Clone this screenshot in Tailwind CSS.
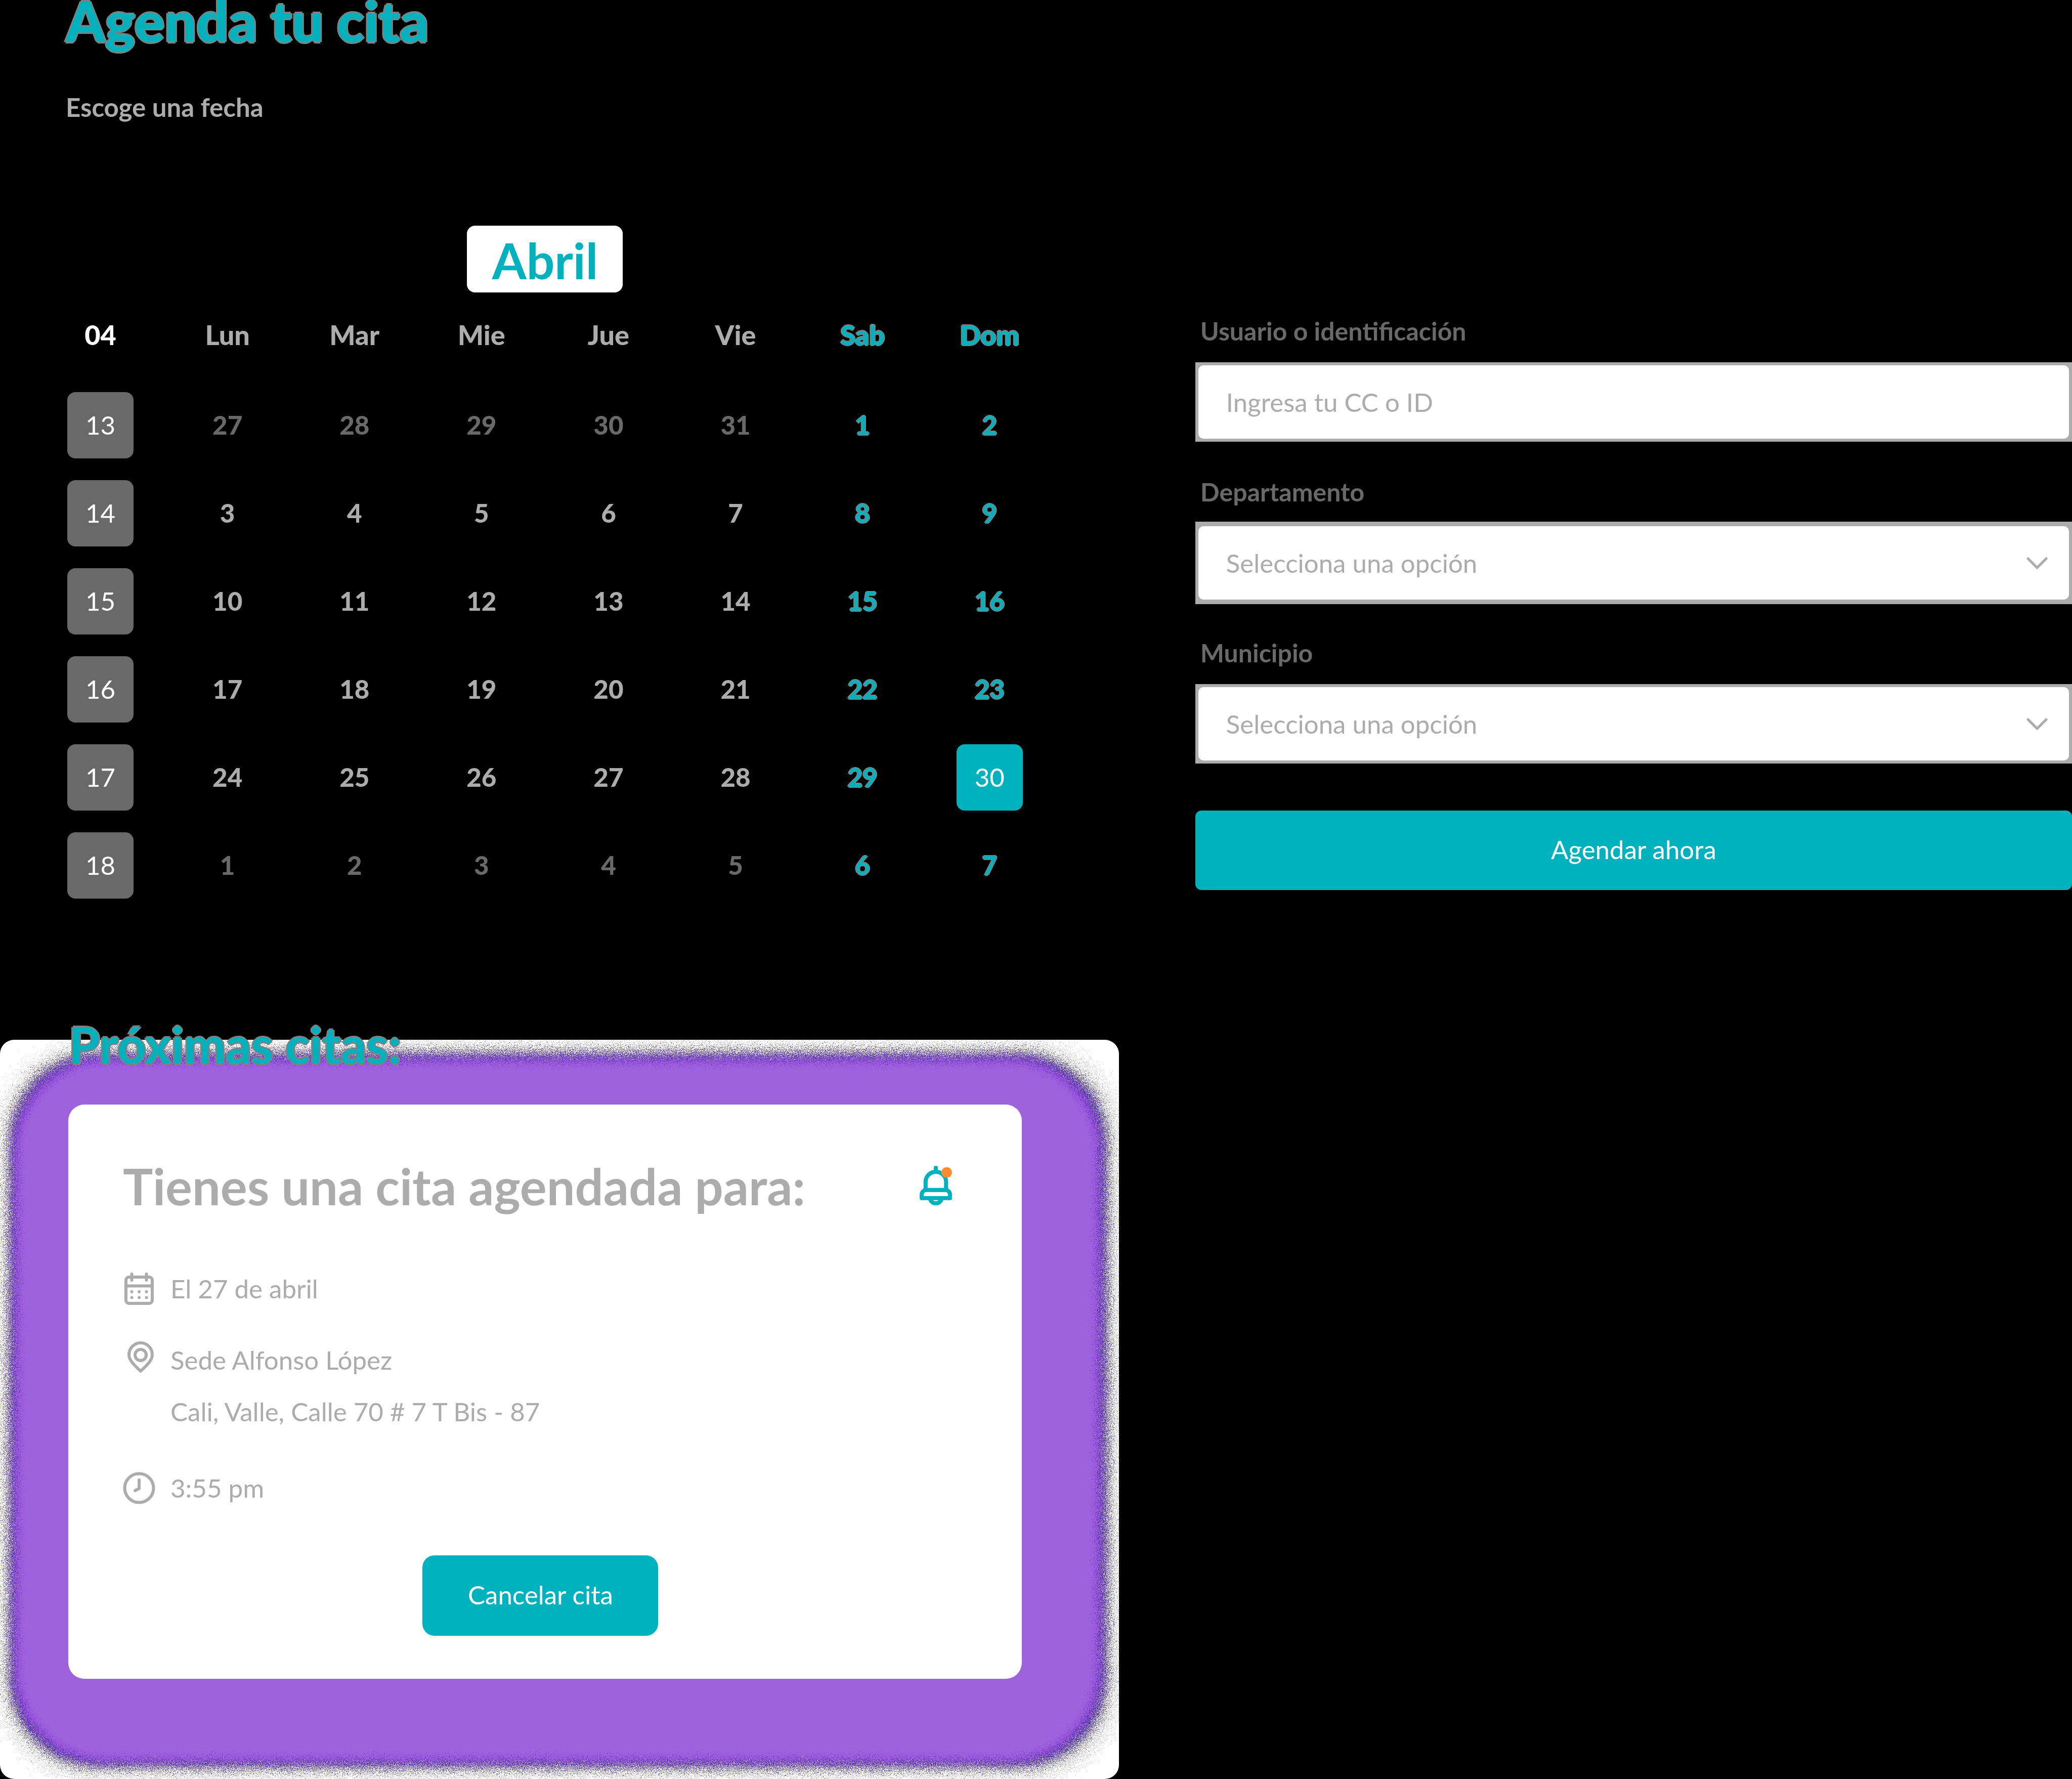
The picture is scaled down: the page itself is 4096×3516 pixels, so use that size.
<!DOCTYPE html>
<html lang="es">
<head>
<meta charset="utf-8">
<meta name="viewport" content="width=device-width, initial-scale=1">
<title>Agenda tu cita</title>
<script src="https://cdn.jsdelivr.net/npm/@tailwindcss/browser@4"></script>
</head>
<body class="bg-black font-['Lato',sans-serif] text-[51px] leading-[60px]">

<!-- Noise filters that spray the edge of the card's glow -->
<svg class="absolute size-0" aria-hidden="true">
  <filter id="spray-wide" x="-5%" y="-5%" width="110%" height="110%">
    <feTurbulence type="fractalNoise" baseFrequency="0.7" numOctaves="2" seed="4"/>
    <feDisplacementMap in="SourceGraphic" scale="150" xChannelSelector="R" yChannelSelector="G"/>
  </filter>
  <filter id="spray-mid" x="-5%" y="-5%" width="110%" height="110%">
    <feTurbulence type="fractalNoise" baseFrequency="0.8" numOctaves="2" seed="9"/>
    <feDisplacementMap in="SourceGraphic" scale="90" xChannelSelector="R" yChannelSelector="G"/>
  </filter>
  <filter id="spray-fine" x="-5%" y="-5%" width="110%" height="110%">
    <feTurbulence type="fractalNoise" baseFrequency="0.8" numOctaves="2" seed="17"/>
    <feDisplacementMap in="SourceGraphic" scale="60" xChannelSelector="R" yChannelSelector="G"/>
  </filter>
</svg>

<main class="grid grid-cols-[54%_46%]">
  <div>
    <header class="pl-[130px]">
      <h1 class="text-[111px] leading-[80px] font-black text-[#00b2bd] [text-shadow:3px_0_#808080,-3px_0_#808080,0_3px_#808080,0_-3px_#808080]">Agenda tu cita</h1>
      <p class="mt-[102px] font-bold text-[#acacac]">Escoge una fecha</p>
    </header>

    <section class="mt-[204px] mr-[130px] ml-[73px]" aria-label="Calendario">
      <h2 class="mx-auto flex h-[132px] w-[308px] items-center justify-center rounded-[16px] bg-white pt-1 text-[98px] font-bold text-[#00b2bd]">Abril</h2>
      <table class="mt-[54px] w-full table-fixed text-center text-[#acacac] [&_td]:h-[174px] [&_td]:p-0 [&_td]:font-black [&_td:nth-child(n+7)]:font-bold [&_td:nth-child(n+7)]:text-[#00b2bd] [&_td:nth-child(n+7)]:[text-shadow:2px_0_#808080,-2px_0_#808080,0_2px_#808080,0_-2px_#808080] [&_tbody_th]:p-0 [&_tbody_th]:font-normal [&_tbody_th]:text-white [&_tbody_th_span]:mx-auto [&_tbody_th_span]:flex [&_tbody_th_span]:size-[131px] [&_tbody_th_span]:items-center [&_tbody_th_span]:justify-center [&_tbody_th_span]:rounded-[16px] [&_tbody_th_span]:bg-[#696969]">
        <thead>
          <tr class="h-[121px] align-top text-[54px] [&_th]:p-0 [&_th]:font-black">
            <th class="text-white">04</th>
            <th>Lun</th><th>Mar</th><th>Mie</th><th>Jue</th><th>Vie</th>
            <th class="text-[#00b2bd] [text-shadow:2px_0_#808080,-2px_0_#808080,0_2px_#808080,0_-2px_#808080]">Sab</th>
            <th class="text-[#00b2bd] [text-shadow:2px_0_#808080,-2px_0_#808080,0_2px_#808080,0_-2px_#808080]">Dom</th>
          </tr>
        </thead>
        <tbody>
          <tr class="text-[#696969]"><th><span>13</span></th><td>27</td><td>28</td><td>29</td><td>30</td><td>31</td><td>1</td><td>2</td></tr>
          <tr><th><span>14</span></th><td>3</td><td>4</td><td>5</td><td>6</td><td>7</td><td>8</td><td>9</td></tr>
          <tr><th><span>15</span></th><td>10</td><td>11</td><td>12</td><td>13</td><td>14</td><td>15</td><td>16</td></tr>
          <tr><th><span>16</span></th><td>17</td><td>18</td><td>19</td><td>20</td><td>21</td><td>22</td><td>23</td></tr>
          <tr><th><span>17</span></th><td>24</td><td>25</td><td>26</td><td>27</td><td>28</td><td>29</td><td><button type="button" class="mx-auto block size-[131px] rounded-[16px] bg-[#00b2bd] font-normal text-white [text-shadow:none]">30</button></td></tr>
          <tr class="text-[#696969]"><th><span>18</span></th><td>1</td><td>2</td><td>3</td><td>4</td><td>5</td><td>6</td><td>7</td></tr>
        </tbody>
      </table>
    </section>

    <section class="relative mt-[217px] pb-[198px]">
      <!-- Glow behind the card -->
      <div class="absolute inset-x-0 top-[41px] bottom-0 overflow-hidden rounded-[28px] bg-white" aria-hidden="true">
        <div class="absolute top-[24px] right-[16px] bottom-[18px] left-[16px] rounded-[170px] bg-[#808080]/50 [filter:url(#spray-wide)]"></div>
        <div class="absolute top-[28px] right-[26px] bottom-[26px] left-[20px] rounded-[175px] bg-[#2a1a90]/80 [filter:url(#spray-mid)]"></div>
        <div class="absolute top-[36px] right-[36px] bottom-[34px] left-[28px] rounded-[175px] bg-[#a84ef0]/80 [filter:url(#spray-mid)]"></div>
        <div class="absolute top-[46px] right-[46px] bottom-[42px] left-[38px] rounded-[175px] bg-[#9e64dc] [filter:url(#spray-fine)]"></div>
      </div>

      <h2 class="relative pl-[136px] text-[99px] leading-[100px] font-bold text-[#00b2bd] [text-shadow:3px_0_#808080,-3px_0_#808080,0_3px_#808080,0_-3px_#808080]">Próximas citas:</h2>

      <article class="relative mt-[69px] mr-[192px] ml-[135px] rounded-[32px] bg-white pt-[111px] pr-[138px] pb-[85px] pl-[108px] text-[#acacac]">
        <div class="flex items-center justify-between">
          <h3 class="text-[99px] leading-[100px] font-bold">Tienes una cita agendada para:</h3>
          <svg class="h-[80px] w-[64px]" viewBox="258 853 183 229" fill="none" stroke="#00b2bd" stroke-width="23" role="img" aria-label="Recordatorio">
            <path d="M349.500 887V864.500" stroke-linecap="round"/>
            <path d="M291.500 990V944a58 57 0 0 1 116 0V990"/>
            <path d="M269.500 1036.500V1016a26 26 0 0 1 26-26H403.500a26 26 0 0 1 26 26V1036.500Z" stroke-linejoin="round"/>
            <path d="M317 1040a33 31 0 0 0 65 0"/>
            <circle cx="411" cy="891" r="30" fill="#ff8b33" stroke="none"/>
          </svg>
        </div>

        <ul class="mt-[121px]">
          <li class="flex h-[64px] items-center gap-[30px]">
            <svg class="size-[64px] shrink-0" viewBox="0 0 64 64" fill="none" stroke="#acacac" stroke-width="6" stroke-linecap="round" aria-hidden="true">
              <rect x="6" y="9" width="52" height="52" rx="6"/>
              <path d="M6 26.500H58M17.500 3V15M46.500 3V15"/>
              <g fill="#acacac" stroke="none">
                <circle cx="17.500" cy="38" r="3"/><circle cx="32" cy="38" r="3"/><circle cx="46.500" cy="38" r="3"/>
                <circle cx="17.500" cy="49.500" r="3"/><circle cx="32" cy="49.500" r="3"/><circle cx="46.500" cy="49.500" r="3"/>
              </g>
            </svg>
            <span>El 27 de abril</span>
          </li>
          <li class="mt-[58px] flex gap-[30px] leading-[102px]">
            <svg class="mt-[14px] size-[64px] shrink-0" viewBox="0 0 64 64" fill="none" stroke="#acacac" stroke-width="6" aria-hidden="true">
              <path d="M35 59C26 50 12 39 12 26.500a23 23.500 0 0 1 46 0C58 39 44 50 35 59Z" stroke-linejoin="round"/>
              <circle cx="35" cy="27" r="11"/>
            </svg>
            <address class="not-italic">Sede Alfonso López<br>Cali, Valle, Calle 70 # 7 T Bis - 87</address>
          </li>
          <li class="mt-[68px] flex h-[64px] items-center gap-[30px]">
            <svg class="size-[64px] shrink-0" viewBox="0 0 64 64" fill="none" stroke="#acacac" stroke-width="6" aria-hidden="true">
              <circle cx="32" cy="32" r="28.500"/>
              <path d="M32 16V33L24 37" stroke-linecap="round" stroke-linejoin="round"/>
            </svg>
            <span>3:55 pm</span>
          </li>
        </ul>

        <div class="mt-[101px] flex justify-center pl-3">
          <button type="button" class="h-[159px] w-[466px] rounded-[24px] bg-[#00b2bd] pb-1 text-white">Cancelar cita</button>
        </div>
      </article>
    </section>
  </div>

  <form class="pt-[624px] pl-[151px] [&_label]:text-[50px]">
    <div class="flex flex-col gap-[32px]">
      <label for="usuario" class="pl-[10px] font-bold text-[#696969]">Usuario o identificación</label>
      <div class="bg-[#acacac] px-[6px] py-[6px]">
        <input id="usuario" type="text" placeholder="Ingresa tu CC o ID" class="block h-[145px] w-full rounded-[10px] bg-white px-[55px] text-[#acacac] placeholder:text-[#acacac]">
      </div>
    </div>
    <div class="mt-[69px] flex flex-col gap-[32px]">
      <label for="departamento" class="pl-[10px] font-bold text-[#696969]">Departamento</label>
      <div class="relative -my-[3px] bg-[#acacac] px-[6px] py-[9px]">
        <select id="departamento" class="block h-[145px] w-full appearance-none rounded-[10px] bg-white px-[55px] text-[#acacac]"><option>Selecciona una opción</option></select>
        <svg class="pointer-events-none absolute inset-y-0 right-[48px] my-auto h-[24px] w-[42px]" viewBox="0 0 42 24" fill="none" stroke="#acacac" stroke-width="5" stroke-linecap="round" stroke-linejoin="round" aria-hidden="true"><path d="M3 3L21 21L39 3"/></svg>
      </div>
    </div>
    <div class="mt-[69px] flex flex-col gap-[32px]">
      <label for="municipio" class="pl-[10px] font-bold text-[#696969]">Municipio</label>
      <div class="relative bg-[#acacac] px-[6px] py-[6px]">
        <select id="municipio" class="block h-[145px] w-full appearance-none rounded-[10px] bg-white px-[55px] text-[#acacac]"><option>Selecciona una opción</option></select>
        <svg class="pointer-events-none absolute inset-y-0 right-[48px] my-auto h-[24px] w-[42px]" viewBox="0 0 42 24" fill="none" stroke="#acacac" stroke-width="5" stroke-linecap="round" stroke-linejoin="round" aria-hidden="true"><path d="M3 3L21 21L39 3"/></svg>
      </div>
    </div>
    <button type="submit" class="mt-[93px] block h-[157px] w-full rounded-[12px] bg-[#00b2bd] pb-1 text-white">Agendar ahora</button>
  </form>
</main>
</body>
</html>
